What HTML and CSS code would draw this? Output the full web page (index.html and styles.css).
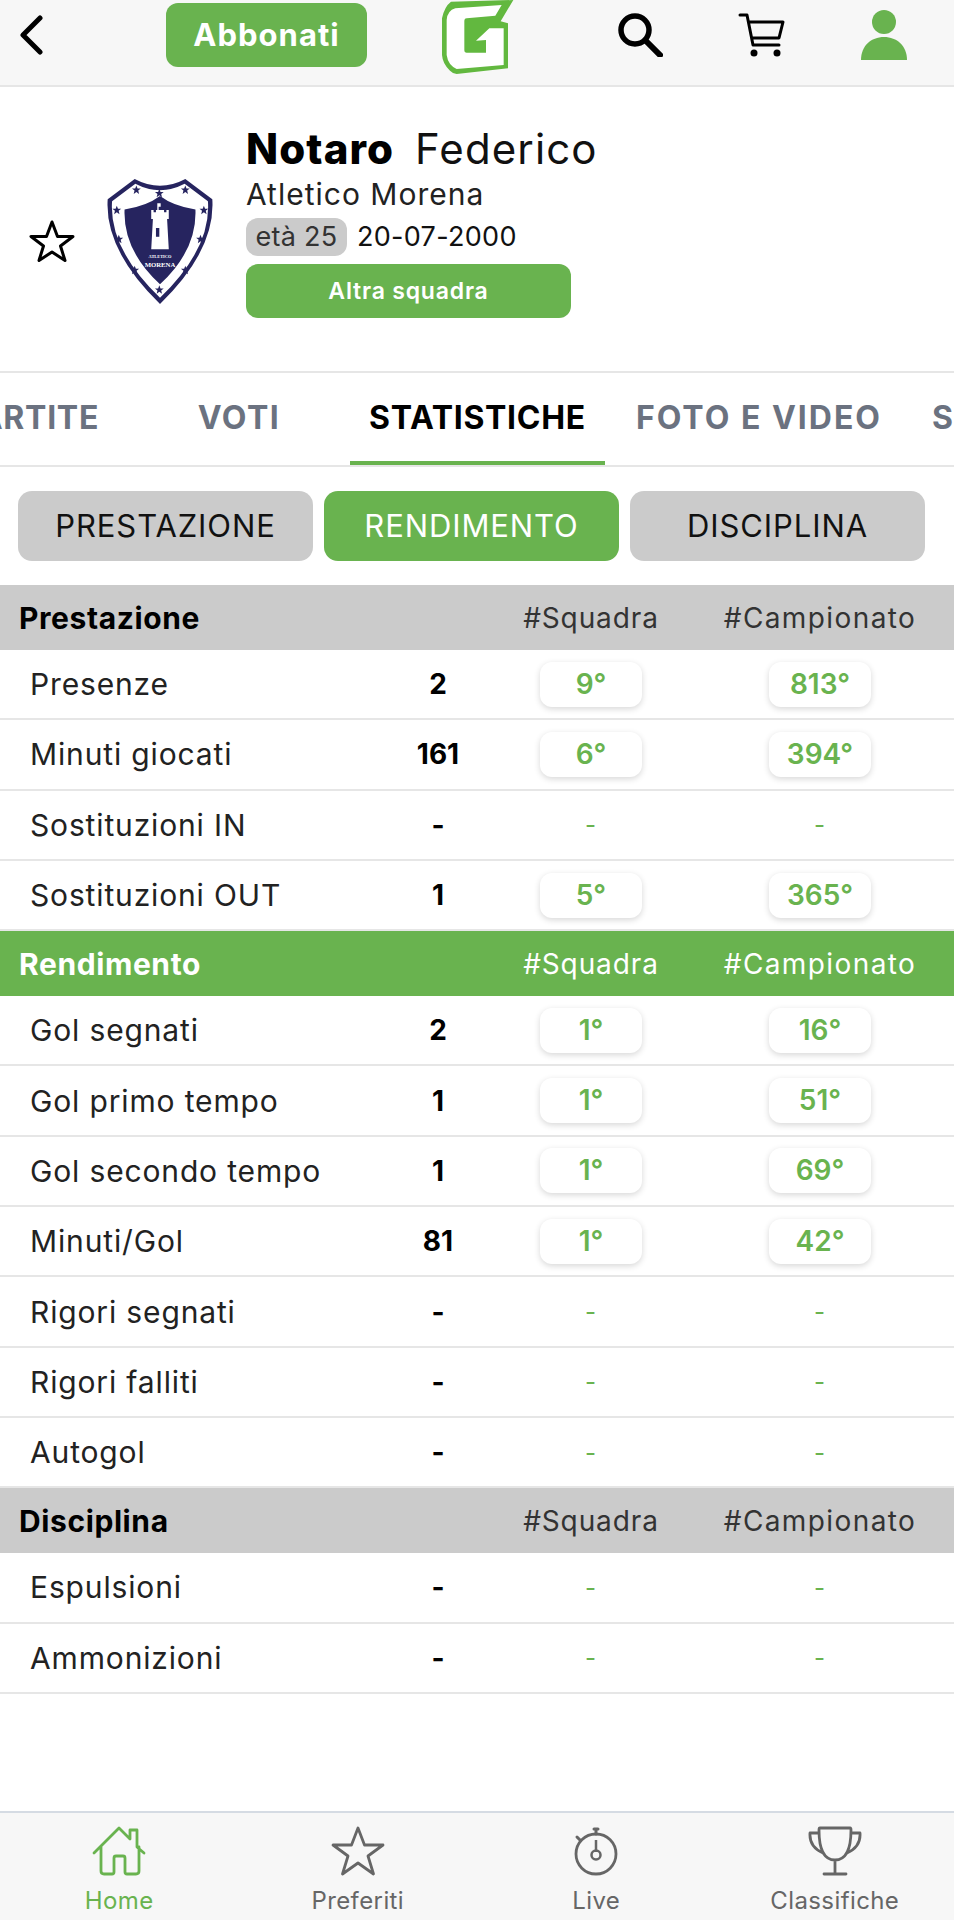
FILE: index.html
```html
<!DOCTYPE html>
<html lang="it">
<head>
<meta charset="utf-8">
<title>Notaro Federico</title>
<link rel="stylesheet" href="styles.css">
</head>
<body>
<div class="page">
  <header class="topbar">
    <svg class="ic-back" viewBox="0 0 25 40"><path d="M21 3 4 20l17 17" fill="none" stroke="#000" stroke-width="5" stroke-linecap="round" stroke-linejoin="round"/></svg>
    <a class="subscribe">Abbonati</a>
    <svg class="logo" viewBox="0 0 240 228"><path d="M45 5 232 0 194 64 216 70V205L62 222Q52 222 42 212 20 192 18 165V55Q25 20 45 5Z" fill="#62b83f"/><path d="M58 25Q34 32 32 60V165Q36 195 62 207L203 195V85H160L120 122 150 120V158H92Q85 158 85 150V62Q85 55 92 55L178 47 197 15Z" fill="#fff"/></svg>
    <svg class="ic-search" viewBox="0 0 46 45"><circle cx="18" cy="18" r="14" fill="none" stroke="#000" stroke-width="5.5"/><path d="m29 29 14 14" stroke="#000" stroke-width="6" stroke-linecap="round"/></svg>
    <svg class="ic-cart" viewBox="0 0 48 44"><path d="M2 2h7l6 30h26M11 9h34l-4 16H14" fill="none" stroke="#000" stroke-width="3" stroke-linecap="round" stroke-linejoin="round"/><circle cx="16" cy="40" r="3.500"/><circle cx="39" cy="40" r="3.500"/></svg>
    <svg class="ic-user" viewBox="0 0 46 50"><ellipse cx="23" cy="12" rx="12" ry="12" fill="#69b34f"/><path d="M0 50C0 36 10 27 23 27s23 9 23 23Z" fill="#69b34f"/></svg>
  </header>

  <section class="profile">
    <svg class="ic-fav" viewBox="0 0 46 42"><path d="m23 2 5.500 14.500H44L31.500 26l4.500 14.500L23 32 10 40.500 14.500 26 2 16.500h15.500Z" fill="none" stroke="#000" stroke-width="3" stroke-linejoin="round"/></svg>
    <svg class="crest" viewBox="80 60 320 370">
      <defs><polygon id="st" points="0,-13 3.500,-4 13,-4 5.500,2 8,12 0,6 -8,12 -5.500,2 -13,-4 -3.500,-4"/></defs>
      <path d="M165 60Q240 100 315 60L395 120Q405 270 240 430 75 270 85 120Z" fill="#26245f"/>
      <path d="M167 74Q240 112 313 74L382 126Q392 265 240 412 88 265 98 126Z" fill="#fff"/>
      <path d="M135 150Q200 140 240 110 280 140 345 150 350 270 240 372 130 270 135 150Z" fill="#26245f"/>
      <g fill="#26245f"><use href="#st" x="170" y="92"/><use href="#st" x="238" y="102"/><use href="#st" x="315" y="92"/><use href="#st" x="112" y="152"/><use href="#st" x="370" y="152"/><use href="#st" x="118" y="238"/><use href="#st" x="360" y="238"/><use href="#st" x="165" y="330"/><use href="#st" x="315" y="330"/><use href="#st" x="238" y="388"/></g>
      <path d="M232 132h10v10h-6v10h-4ZM214 152h7v6h7v-6h24v6h7v-6h7v26h-5l5 90h-52l5-90h-5Z" fill="#fff"/>
      <rect x="228" y="205" width="10" height="26" fill="#26245f"/>
      <text class="crest-a" x="240" y="294" text-anchor="middle">ATLETICO</text>
      <text class="crest-b" x="240" y="322" text-anchor="middle">MORENA</text>
    </svg>
    <div class="info">
      <h1 class="name"><b>Notaro</b> <span>Federico</span></h1>
      <p class="club">Atletico Morena</p>
      <p class="dates"><span class="age">età 25</span> 20-07-2000</p>
      <a class="other">Altra squadra</a>
    </div>
  </section>

  <nav class="tabs">
    <div class="tabs-inner">
      <a class="tab t-partite">PARTITE</a>
      <a class="tab t-voti">VOTI</a>
      <a class="tab active">STATISTICHE</a>
      <a class="tab t-foto">FOTO E VIDEO</a>
      <a class="tab">SUBENTRI</a>
    </div>
  </nav>

  <div class="seg">
    <a class="seg-btn">PRESTAZIONE</a>
    <a class="seg-btn on">RENDIMENTO</a>
    <a class="seg-btn">DISCIPLINA</a>
  </div>

  <div class="row head"><b>Prestazione</b><i></i><span>#Squadra</span><span class="h-c">#Campionato</span></div>
  <div class="row"><span>Presenze</span><b>2</b><em>9°</em><em>813°</em></div>
  <div class="row"><span>Minuti giocati</span><b>161</b><em>6°</em><em>394°</em></div>
  <div class="row"><span>Sostituzioni IN</span><b>-</b><small>-</small><small>-</small></div>
  <div class="row"><span>Sostituzioni OUT</span><b>1</b><em>5°</em><em>365°</em></div>

  <div class="row head green"><b>Rendimento</b><i></i><span>#Squadra</span><span class="h-c">#Campionato</span></div>
  <div class="row"><span>Gol segnati</span><b>2</b><em>1°</em><em>16°</em></div>
  <div class="row"><span>Gol primo tempo</span><b>1</b><em>1°</em><em>51°</em></div>
  <div class="row"><span>Gol secondo tempo</span><b>1</b><em>1°</em><em>69°</em></div>
  <div class="row"><span>Minuti/Gol</span><b>81</b><em>1°</em><em>42°</em></div>
  <div class="row"><span>Rigori segnati</span><b>-</b><small>-</small><small>-</small></div>
  <div class="row"><span>Rigori falliti</span><b>-</b><small>-</small><small>-</small></div>
  <div class="row"><span>Autogol</span><b>-</b><small>-</small><small>-</small></div>

  <div class="row head"><b>Disciplina</b><i></i><span>#Squadra</span><span class="h-c">#Campionato</span></div>
  <div class="row"><span>Espulsioni</span><b>-</b><small>-</small><small>-</small></div>
  <div class="row"><span>Ammonizioni</span><b>-</b><small>-</small><small>-</small></div>

  <footer class="bottom">
    <a class="nav on">
      <svg viewBox="0 0 54 50"><path d="M2 27 27 2l11 11V4h7v17l7 6M9 21v24q0 3 3 3h8q2 0 2-2V32q0-2 2-2h7q2 0 2 2v14q0 2 2 2h9q3 0 3-3V21" fill="none" stroke="currentColor" stroke-width="2.800" stroke-linecap="round" stroke-linejoin="round"/></svg>
      Home
    </a>
    <a class="nav">
      <svg viewBox="0 0 54 50"><path d="m27 2 6.500 17H52L37 30l5.500 18L27 37 11.500 48 17 30 2 19h18.500Z" fill="none" stroke="currentColor" stroke-width="2.800" stroke-linejoin="round"/></svg>
      Preferiti
    </a>
    <a class="nav">
      <svg viewBox="0 0 54 50"><circle cx="27" cy="28" r="20" fill="none" stroke="currentColor" stroke-width="2.800"/><path d="M27 8V3M11 14l-3-3M25 3h4" fill="none" stroke="currentColor" stroke-width="3" stroke-linecap="round"/><path d="M27 14v12" stroke="currentColor" stroke-width="2.500"/><circle cx="27" cy="29" r="4.500" fill="none" stroke="currentColor" stroke-width="2.500"/></svg>
      Live
    </a>
    <a class="nav">
      <svg viewBox="0 0 54 50"><path d="M12 2q-1 0-1 2 0 30 16 30 16 0 16-30 0-2-1-2ZM11 7H2q-1 14 13 20M43 7h9q1 14-13 20M27 34v13M16 48h22" fill="none" stroke="currentColor" stroke-width="2.800" stroke-linecap="round" stroke-linejoin="round"/></svg>
      Classifiche
    </a>
  </footer>
</div>
</body>
</html>
```
FILE: styles.css
```css
* { box-sizing: border-box; }
html, body { margin: 0; padding: 0; background: #fff; }
body { font-family: Inter, "Liberation Sans", sans-serif; color: #111; }
a { display: block; }
p, h1 { margin: 0; }
svg { display: block; flex: none; }

.page { width: 954px; height: 1920px; display: flex; flex-direction: column; overflow: hidden; }

.topbar { height: 87px; flex: none; background: #f7f7f7; border-bottom: 2px solid #e6e6e6; display: flex; align-items: flex-start; }
.ic-back { width: 25px; height: 40px; margin: 15px 0 0 19px; }
.subscribe { width: 201px; height: 64px; margin: 3px 0 0 122px; background: #69b34f; border-radius: 12px; color: #fff; font-weight: 700; font-size: 31px; letter-spacing: 1px; line-height: 64px; text-align: center; }
.logo { width: 80px; height: 76px; margin: 0 0 0 69px; }
.ic-search { width: 46px; height: 45px; margin: 12px 0 0 101px; }
.ic-cart { width: 48px; height: 44px; margin: 13px 0 0 75px; }
.ic-user { width: 46px; height: 50px; margin: 10px 0 0 75px; }

.profile { height: 286px; flex: none; border-bottom: 2px solid #e6e6e6; display: flex; align-items: flex-start; }
.ic-fav { width: 46px; height: 42px; margin: 133px 0 0 29px; }
.crest { width: 108px; height: 125px; margin: 92px 0 0 31px; }
.crest-a { font: 700 13px "Liberation Serif", serif; fill: #fff; }
.crest-b { font: 700 20px "Liberation Serif", serif; fill: #fff; }
.info { margin: 38px 0 0 32px; display: flex; flex-direction: column; align-items: flex-start; }
.name { font-size: 42px; letter-spacing: 1.1px; line-height: 48px; font-weight: 400; white-space: nowrap; }
.name b { font-weight: 800; color: #000; margin-right: 8px; }
.club { font-size: 30px; letter-spacing: 1px; line-height: 36px; margin-top: 3px; color: #222; }
.dates { font-size: 27px; letter-spacing: .3px; line-height: 38px; margin-top: 6px; display: flex; align-items: center; gap: 10px; }
.age { background: #cbcbcb; border-radius: 12px; width: 101px; text-align: center; height: 38px; color: #333; }
.other { width: 325px; height: 54px; margin-top: 8px; background: #69b34f; border-radius: 12px; color: #fff; font-weight: 600; font-size: 23px; letter-spacing: .8px; line-height: 54px; text-align: center; }

.tabs { height: 94px; flex: none; border-bottom: 2px solid #e6e6e6; overflow: hidden; }
.tabs-inner { display: flex; margin-left: -59px; height: 100%; width: 1400px; gap: 12px; }
.tab { padding: 0 19px; font-weight: 700; font-size: 32px; letter-spacing: .7px; line-height: 90px; color: #6b7280; white-space: nowrap; height: 94px; }
.t-voti { width: 208px; padding-left: 29px; text-align: center; letter-spacing: 1.5px; }
.t-foto { letter-spacing: 2px; }
.tab.active { color: #000; border-bottom: 6px solid #69b34f; }

.seg { height: 118px; flex: none; display: flex; gap: 11px; padding: 24px 0 0 18px; }
.seg-btn { width: 295px; height: 70px; background: #cbcbcb; border-radius: 14px; font-size: 31px; letter-spacing: .9px; line-height: 70px; text-align: center; color: #111; }
.seg-btn.on { background: #69b34f; color: #fff; }

.row { display: grid; grid-template-columns: 388px 100px 206px 252px; align-items: center; height: 70.300px; flex: none; border-bottom: 2px solid #e6e6e6; font-size: 30px; letter-spacing: .85px; color: #222; }
.row > span:first-child { padding-left: 30px; }
.row > b { text-align: center; color: #000; font-weight: 700; font-size: 28px; letter-spacing: 0; }
.row > em { justify-self: center; width: 102px; height: 45px; line-height: 45px; text-align: center; font-style: normal; font-weight: 600; font-size: 28px; letter-spacing: 0; color: #69b34f; background: #fff; border-radius: 12px; box-shadow: 0 2px 6px rgba(0,0,0,.16); }
.row > small { text-align: center; font-size: 24px; color: #69b34f; }
.row.head { height: 65px; background: #cbcbcb; border-bottom: 0; color: #333; font-size: 28px; letter-spacing: .9px; }
.row.head > b { padding-left: 19px; text-align: left; color: #000; font-size: 30px; letter-spacing: .6px; font-weight: 700; }
.head > span { text-align: center; }
.head > .h-c { letter-spacing: 1.400px; }
.row.head.green { background: #69b34f; color: #fff; }
.row.head.green > b { color: #fff; }

.bottom { margin-top: auto; height: 109px; flex: none; background: #f7f7f7; border-top: 2px solid #d5dbe3; display: grid; grid-template-columns: repeat(4, 1fr); }
.nav { display: flex; flex-direction: column; align-items: center; color: #666; font-size: 24px; letter-spacing: .4px; line-height: 28px; padding-top: 13px; }
.nav svg { width: 54px; height: 50px; margin-bottom: 11px; }
.nav.on { color: #69b34f; }
```
